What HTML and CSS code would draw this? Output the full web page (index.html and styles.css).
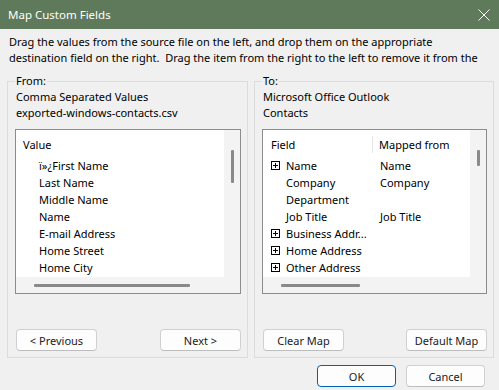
FILE: index.html
```html
<!doctype html>
<html lang="en">
	<head>
		<meta charset="utf-8">
		<title>Map Custom Fields</title>
		<link rel="stylesheet" href="styles.css">
	</head>
	<body>
		<div class="dialog">
			<div class="titlebar">
				<span class="title">Map Custom Fields</span>
				<svg class="close" width="12" height="12" viewBox="0 0 12 12">
					<path d="M0.5 0.5 L11.5 11.5 M11.5 0.5 L0.5 11.5" stroke="#fff" stroke-width="1" fill="none" />
				</svg>
			</div>

			<p class="intro">Drag the values from the source file on the left, and drop them on the appropriate<br>destination field on the right.&nbsp; Drag the item from the right to the left to remove it from the</p>

			<div class="groups">
				<fieldset class="group">
					<legend>From:</legend>
					<div class="source">Comma Separated Values</div>
					<div class="source">exported-windows-contacts.csv</div>
					<div class="listbox">
						<div class="list-view">
							<div class="list-head value-head">Value</div>
							<ul class="rows value-rows">
								<li>ï»¿First Name</li>
								<li>Last Name</li>
								<li>Middle Name</li>
								<li>Name</li>
								<li>E-mail Address</li>
								<li>Home Street</li>
								<li>Home City</li>
							</ul>
						</div>
						<div class="vscroll"><span class="vthumb thumb-long"></span></div>
						<div class="hscroll"><span class="hthumb thumb-wide"></span></div>
						<div class="corner"></div>
					</div>
					<div class="group-buttons">
						<button class="btn">&lt; Previous</button>
						<button class="btn">Next &gt;</button>
					</div>
				</fieldset>

				<fieldset class="group">
					<legend>To:</legend>
					<div class="source">Microsoft Office Outlook</div>
					<div class="source">Contacts</div>
					<div class="listbox">
						<div class="list-view">
							<div class="list-head map-head">
								<span class="col-field">Field</span>
								<span class="col-mapped">Mapped from</span>
							</div>
							<ul class="rows map-rows">
								<li><span class="col-field"><i class="plus"></i>Name</span><span class="col-mapped">Name</span></li>
								<li><span class="col-field">Company</span><span class="col-mapped">Company</span></li>
								<li><span class="col-field">Department</span><span class="col-mapped"></span></li>
								<li><span class="col-field">Job Title</span><span class="col-mapped">Job Title</span></li>
								<li><span class="col-field"><i class="plus"></i>Business Addr...</span><span class="col-mapped"></span></li>
								<li><span class="col-field"><i class="plus"></i>Home Address</span><span class="col-mapped"></span></li>
								<li><span class="col-field"><i class="plus"></i>Other Address</span><span class="col-mapped"></span></li>
							</ul>
						</div>
						<div class="vscroll"><span class="vthumb thumb-short"></span></div>
						<div class="hscroll"><span class="hthumb thumb-narrow"></span></div>
						<div class="corner"></div>
					</div>
					<div class="group-buttons">
						<button class="btn">Clear Map</button>
						<button class="btn">Default Map</button>
					</div>
				</fieldset>
			</div>

			<div class="footer">
				<button class="btn btn-default">OK</button>
				<button class="btn">Cancel</button>
			</div>
		</div>
	</body>
</html>
```

FILE: styles.css
```css
html,
body,
p,
ul,
li,
fieldset,
legend {
	margin: 0;
	padding: 0;
}
li {
	list-style: none;
}
body {
	font-family: "Noto Sans", "Open Sans", sans-serif;
	font-size: 11px;
	line-height: 16px;
	color: #000;
	background: #f0f0f0;
}
.dialog {
	width: 499px;
	height: 390px;
	overflow: hidden;
	background: #f0f0f0;
}

/* title bar */
.titlebar {
	display: flex;
	align-items: center;
	justify-content: space-between;
	height: 29px;
	padding: 0 9px 0 8px;
	box-sizing: border-box;
	color: #fff;
	font-size: 11.5px;
	background: #5e7a5b;
}
.close {
	display: block;
}

.intro {
	padding: 5px 8px 0 9px;
	height: 32px;
	white-space: nowrap;
	overflow: hidden;
}

/* group boxes */
.groups {
	display: flex;
	gap: 6px;
	margin: 7px 0 0 7px;
}
.group {
	box-sizing: border-box;
	min-width: 0;
	padding: 0 6px 6px 7px;
	border: 1px solid #dcdcdc;
}
.group:first-child {
	width: 241px;
}
.group:last-child {
	width: 240px;
}
.group legend {
	padding: 0 1px;
	line-height: 16px;
}
.source {
	padding-left: 1px;
}

/* list views */
.listbox {
	display: grid;
	grid-template-columns: 1fr 16px;
	grid-template-rows: 147px 16px;
	margin-top: 8px;
	border: 1px solid #8c8c8c;
	background: #fff;
}
.list-view {
	overflow: hidden;
	padding-top: 6px;
}
.list-head {
	height: 17px;
	line-height: 17px;
	margin-bottom: 4px;
}
.rows li {
	height: 17px;
	line-height: 17px;
	white-space: nowrap;
}
.value-head {
	padding-left: 7px;
}
.value-rows li {
	padding-left: 23px;
}
.map-head,
.map-rows li {
	display: grid;
	grid-template-columns: 110px 1fr;
}
.col-field {
	display: flex;
	align-items: center;
	padding-left: 23px;
}
.map-head .col-field {
	padding-left: 8px;
	border-right: 1px solid #e5e5e5;
}
.col-mapped {
	padding-left: 7px;
}
.map-head .col-mapped {
	padding-left: 6px;
}
.plus {
	position: relative;
	box-sizing: border-box;
	width: 9px;
	height: 9px;
	margin: 0 6px 0 -15px;
	border: 1px solid #000;
}
.plus:before,
.plus:after {
	position: absolute;
	content: "";
	background: #000;
}
.plus:before {
	left: 1px;
	top: 3px;
	width: 5px;
	height: 1px;
}
.plus:after {
	left: 3px;
	top: 1px;
	width: 1px;
	height: 5px;
}

/* scrollbars */
.vscroll {
	display: flex;
	justify-content: center;
	padding-top: 20px;
	background: #f3f3f3;
}
.vthumb {
	width: 3px;
	border-radius: 1px;
	background: #8a8a8a;
}
.thumb-long {
	height: 33px;
}
.thumb-short {
	height: 16px;
}
.hscroll {
	display: flex;
	align-items: center;
	padding-left: 18px;
	background: #f3f3f3;
}
.hthumb {
	height: 3px;
	border-radius: 1px;
	background: #8a8a8a;
}
.thumb-wide {
	width: 156px;
}
.thumb-narrow {
	width: 79px;
}
.corner {
	background: #f3f3f3;
}

/* buttons */
.btn {
	box-sizing: border-box;
	width: 81px;
	height: 22px;
	padding: 0;
	font-family: inherit;
	font-size: 11px;
	color: #1b1b1b;
	border: 1px solid #d0d0d0;
	border-bottom-color: #bdbdbd;
	border-radius: 4px;
	background: #fdfdfd;
}
.group-buttons {
	display: flex;
	justify-content: space-between;
	margin-top: 35px;
	padding-left: 1px;
}
.footer {
	display: flex;
	justify-content: flex-end;
	gap: 10px;
	margin-top: 7px;
	padding-right: 14px;
}
.footer .btn {
	width: 79px;
}
.btn-default {
	border: 1px solid #005fb8;
}
```
